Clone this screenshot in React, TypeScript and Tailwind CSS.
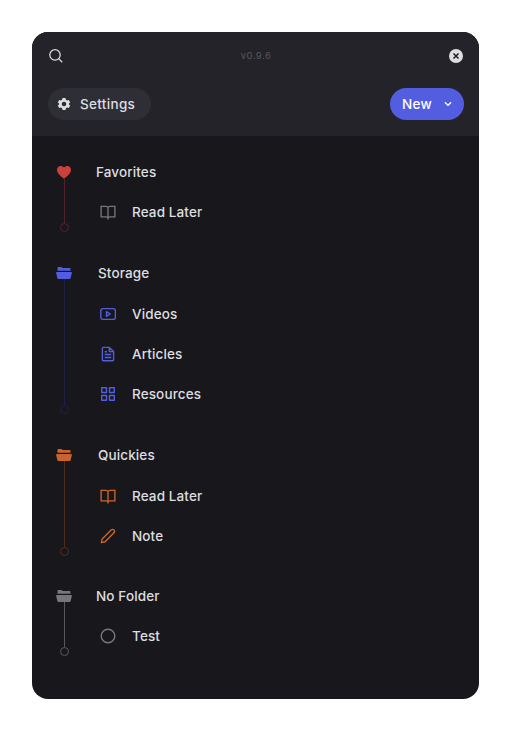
import type { ReactNode } from "react";

const stroke = {
  fill: "none",
  stroke: "currentColor",
  strokeWidth: 1.4,
  strokeLinecap: "round" as const,
  strokeLinejoin: "round" as const,
};

function Icon({ children }: { children: ReactNode }) {
  return (
    <svg viewBox="0 0 16 16" className="block size-4 shrink-0">
      {children}
    </svg>
  );
}

const Heart = () => (
  <Icon>
    <path
      fill="currentColor"
      d="M8 14.7C5.2 12.4 1 9.500 1 5.700 1 3.500 2.600 1.900 4.600 1.900 6 1.900 7.300 2.500 8 3.400 8.700 2.500 10 1.900 11.400 1.900 13.400 1.900 15 3.500 15 5.700 15 9.500 10.800 12.400 8 14.700Z"
    />
  </Icon>
);

const Folder = () => (
  <Icon>
    <path fill="currentColor" d="M1.500 5.800V2.700q0-.7.700-.7H5.500l1 1H13.700q.8 0 .8.800V5.800Z" />
    <path
      fill="currentColor"
      d="M.8 6.900H15.200q.8 0 .7.800L14.600 13.200q-.2.800-1 .8H2.400q-.8 0-1-.8L.1 7.700Q0 6.900.8 6.900Z"
    />
  </Icon>
);

const Book = () => (
  <Icon>
    <path
      {...stroke}
      strokeWidth="1.350"
      strokeLinejoin="miter"
      d="M8 3.200V15M8 3.500C7.600 2.700 6.900 2.300 6 2.300H1.100V12.900H6c1 0 1.600.3 2 1C8.400 13.200 9 12.900 10 12.900H14.900V2.300H10C9.100 2.300 8.400 2.700 8 3.500"
    />
  </Icon>
);

const Video = () => (
  <Icon>
    <rect {...stroke} x=".8" y="2.600" width="14.600" height="10.800" rx="2.200" />
    <path {...stroke} d="M6.500 5.700V10.300L10.300 8Z" />
  </Icon>
);

const Article = () => (
  <Icon>
    <path {...stroke} d="M9.300 1.400H3.300q-.9 0-.9.900V13.800q0 .9.900.9H12.700q.9 0 .9-.9V5.600L9.300 1.400V5.600H13.600" />
    <path {...stroke} strokeLinecap="butt" d="M4.700 5.700H7M4.700 8.500H11.300M4.700 11.500H11.300" />
  </Icon>
);

const Grid = () => (
  <Icon>
    <g {...stroke}>
      <rect x="1.700" y="1.700" width="4.800" height="4.800" />
      <rect x="9.500" y="1.700" width="4.800" height="4.800" />
      <rect x="1.700" y="9.500" width="4.800" height="4.800" />
      <rect x="9.500" y="9.500" width="4.800" height="4.800" />
    </g>
  </Icon>
);

const Pencil = () => (
  <Icon>
    <path
      {...stroke}
      d="M1.400 14.600 2.200 10.900 11.400 1.800Q12.600.8 13.900 2.100 15.200 3.400 14.200 4.600L5.100 13.800Z"
    />
  </Icon>
);

const Circle = () => (
  <Icon>
    <circle {...stroke} cx="8" cy="8" r="6.800" />
  </Icon>
);

type Item = { label: string; icon: ReactNode };

type GroupProps = {
  title: string;
  icon: ReactNode;
  tint: string;
  itemTint: string;
  line: string;
  ring: string;
  heading: string;
  items: Item[];
};

function Group({ title, icon, tint, itemTint, line, ring, heading, items }: GroupProps) {
  return (
    <section className="flex pl-6">
      <div className={`flex w-[17px] flex-col items-center pt-3 ${tint}`}>
        <div className="h-[14px] w-full">{icon}</div>
        <div className={`w-px flex-1 ${line}`} />
        <div className={`size-[9px] shrink-0 rounded-full border ${ring}`} />
      </div>
      <div className="flex flex-col">
        <h2 className={`flex items-center ${heading}`}>{title}</h2>
        <ul className="pl-[27px]">
          {items.map((item) => (
            <li key={item.label} className="flex h-10 items-center gap-4">
              <span className={itemTint}>{item.icon}</span>
              <span>{item.label}</span>
            </li>
          ))}
        </ul>
      </div>
    </section>
  );
}

export default function App() {
  return (
    <div className="h-[731px] w-[511px] bg-white p-8 font-['Inter',sans-serif] text-[13.5px] leading-5 font-medium tracking-[0.12px] text-[#dedee0]">
      <main className="h-[667px] w-[447px] overflow-hidden rounded-2xl bg-[#18181c]">
        <header className="flex h-[104px] flex-col justify-between bg-[#242329] pr-[15px] pb-4 pl-4">
          <div className="flex h-12 items-center justify-between">
            <svg viewBox="0 0 16 16" className="size-4">
              <g fill="none" stroke="currentColor" strokeWidth="1.250">
                <circle cx="7" cy="6.900" r="5.200" />
                <path d="m10.700 10.600 3.500 3.600" />
              </g>
            </svg>
            <span className="text-[9.5px] font-normal tracking-[0.45px] text-[#56555b]">v0.9.6</span>
            <svg viewBox="0 0 16 16" className="size-4">
              <circle cx="8" cy="8" r="7" fill="#dedede" />
              <path d="m5.500 5.500 5 5m0-5-5 5" stroke="#242329" strokeWidth="1.600" />
            </svg>
          </div>
          <div className="flex justify-between">
            <button className="flex h-8 w-[103px] items-center gap-2 rounded-full bg-[#2e2e36] pl-2">
              <svg viewBox="0 0 16 16" className="size-4">
                <path
                  fill="currentColor"
                  fillRule="evenodd"
                  d="M6.600 2h2.800l.5 1.800 1.100.6 1.800-.5 1.400 2.500L12.900 7.400v1.200l1.300 1-1.400 2.500-1.800-.5-1.100.6L9.400 14H6.600l-.5-1.800L5 11.600l-1.800.5-1.400-2.500 1.300-1V7.400L1.800 6.400l1.400-2.500 1.800.5 1.100-.6ZM8 5.700a2.300 2.300 0 1 0 0 4.600 2.300 2.300 0 0 0 0-4.600Z"
                />
              </svg>
              <span className="tracking-[0.32px]">Settings</span>
            </button>
            <button className="flex h-8 w-[74px] items-center justify-between rounded-full bg-[#535de0] px-3 text-white">
              <span className="tracking-[0.35px]">New</span>
              <svg viewBox="0 0 8 8" className="size-2">
                <path
                  d="m1.300 2.800 2.700 2.500 2.700-2.500"
                  fill="none"
                  stroke="currentColor"
                  strokeWidth="1.400"
                  strokeLinecap="round"
                />
              </svg>
            </button>
          </div>
        </header>

        <div className="flex flex-col pt-4">
          <Group
            title="Favorites"
            icon={<Heart />}
            tint="text-[#c9403c]"
            itemTint="text-[#77777a]"
            line="bg-[#542126]"
            ring="border-[#542126]"
            heading="h-10 pl-[23px]"
            items={[{ label: "Read Later", icon: <Book /> }]}
          />
          <div className="h-[21px]" />
          <Group
            title="Storage"
            icon={<Folder />}
            tint="text-[#535de0]"
            itemTint="text-[#535de0]"
            line="bg-[#1f2047]"
            ring="border-[#1f2047]"
            heading="h-[41px] pb-px pl-[25px]"
            items={[
              { label: "Videos", icon: <Video /> },
              { label: "Articles", icon: <Article /> },
              { label: "Resources", icon: <Grid /> },
            ]}
          />
          <div className="h-[21px]" />
          <Group
            title="Quickies"
            icon={<Folder />}
            tint="text-[#cb642c]"
            itemTint="text-[#cb642c]"
            line="bg-[#522d1c]"
            ring="border-[#522d1c]"
            heading="h-[41px] pb-px pl-[25px]"
            items={[
              { label: "Read Later", icon: <Book /> },
              { label: "Note", icon: <Pencil /> },
            ]}
          />
          <div className="h-5" />
          <Group
            title="No Folder"
            icon={<Folder />}
            tint="text-[#77777a]"
            itemTint="text-[#77777a]"
            line="bg-[#59595d]"
            ring="border-[#59595d]"
            heading="h-10 pl-[23px]"
            items={[{ label: "Test", icon: <Circle /> }]}
          />
        </div>
      </main>
    </div>
  );
}
